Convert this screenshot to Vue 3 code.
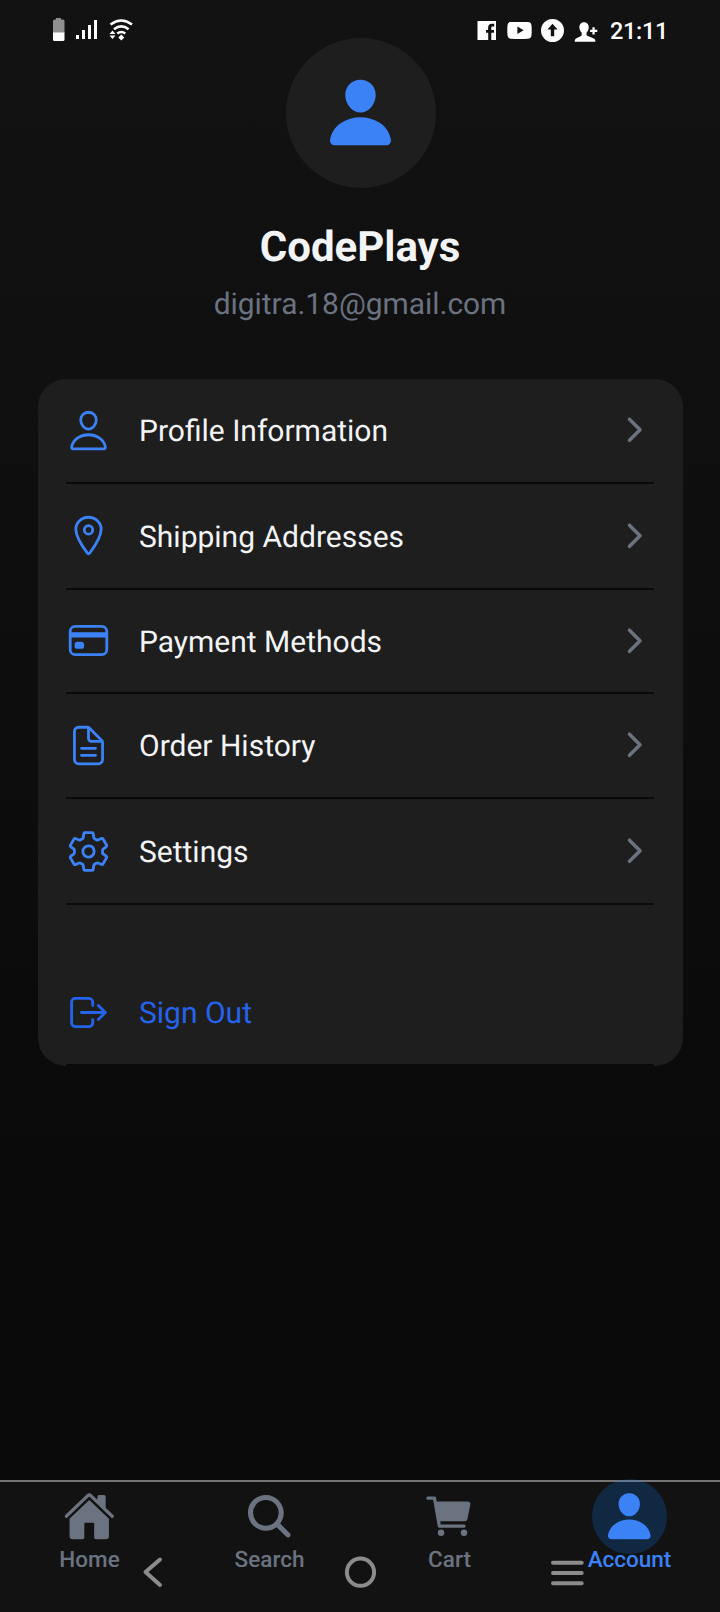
<script setup>
const menu = [
  { label: 'Profile Information', icon: 'person' },
  { label: 'Shipping Addresses', icon: 'location' },
  { label: 'Payment Methods', icon: 'card' },
  { label: 'Order History', icon: 'document' },
  { label: 'Settings', icon: 'settings' },
]

const strokes = {
  person: [
    'M344 144c-3.92 52.87-44 96-88 96s-84.15-43.12-88-96c-4-55 35-96 88-96s92 42 88 96z',
    'M256 304c-87 0-175.3 48-191.64 138.6C62.39 453.52 68.57 464 80 464h352c11.44 0 17.62-10.48 15.65-21.4C431.3 352 343 304 256 304z',
  ],
  location: [
    'M256 48c-79.5 0-144 61.39-144 137 0 87 96 224.87 131.25 272.49a15.77 15.77 0 0025.5 0C304 409.89 400 272.07 400 185c0-75.61-64.5-137-144-137z',
    'M304 192a48 48 0 11-96 0 48 48 0 0196 0z',
  ],
  card: ['M104 96h304a56 56 0 0156 56v208a56 56 0 01-56 56H104a56 56 0 01-56-56V152a56 56 0 0156-56z'],
  document: [
    'M416 221.25V416a48 48 0 01-48 48H144a48 48 0 01-48-48V96a48 48 0 0148-48h98.75a32 32 0 0122.62 9.37l141.26 141.26a32 32 0 019.37 22.62z',
    'M256 56v120a32 32 0 0032 32h120M176 288h160M176 368h160',
  ],
  settings: [
    'M262.29 192.31a64 64 0 1057.4 57.4 64.13 64.13 0 00-57.4-57.4zM416.39 256a154.34 154.34 0 01-1.53 20.79l45.21 35.46a10.81 10.81 0 012.45 13.75l-42.77 74a10.81 10.81 0 01-13.14 4.59l-44.9-18.08a16.11 16.11 0 00-15.17 1.75A164.48 164.48 0 01325 400.8a15.94 15.94 0 00-8.82 12.14l-6.73 47.89a11.08 11.08 0 01-10.68 9.17h-85.54a11.11 11.11 0 01-10.69-8.87l-6.72-47.82a16.07 16.07 0 00-9-12.22 155.3 155.3 0 01-21.46-12.57 16 16 0 00-15.11-1.71l-44.89 18.07a10.81 10.81 0 01-13.14-4.58l-42.77-74a10.8 10.8 0 012.45-13.75l38.21-30a16.05 16.05 0 006-14.08c-.36-4.17-.58-8.33-.58-12.5s.21-8.27.58-12.35a16 16 0 00-6.07-13.94l-38.19-30A10.81 10.81 0 0149.48 186l42.77-74a10.81 10.81 0 0113.14-4.59l44.9 18.08a16.11 16.11 0 0015.17-1.75A164.48 164.48 0 01187 111.2a15.94 15.94 0 008.82-12.14l6.73-47.89A11.08 11.08 0 01213.23 42h85.54a11.11 11.11 0 0110.69 8.87l6.72 47.82a16.07 16.07 0 009 12.22 155.3 155.3 0 0121.46 12.57 16 16 0 0015.11 1.71l44.89-18.07a10.81 10.81 0 0113.14 4.58l42.77 74a10.8 10.8 0 01-2.45 13.75l-38.21 30a16.05 16.05 0 00-6.05 14.08c.33 4.14.55 8.3.55 12.47z',
  ],
}

const personFill =
  'M332.64 64.58C313.18 43.57 286 32 256 32c-30.16 0-57.43 11.5-76.8 32.38-19.58 21.11-29.12 49.8-26.88 80.78C156.76 206.28 203.27 256 256 256s99.16-49.71 103.67-110.82c2.27-30.7-7.33-59.33-27.03-80.6zM432 480H80a31 31 0 01-24.2-11.13c-6.5-7.77-9.12-18.38-7.18-29.11C57.06 392.94 83.4 353.61 124.8 326c36.78-24.51 83.37-38 131.2-38s94.42 13.5 131.2 38c41.4 27.6 67.74 66.93 76.18 113.75 1.94 10.73-.68 21.34-7.18 29.11A31 31 0 01432 480z'

const tabs = [
  {
    label: 'Home',
    d: 'M261.56 101.28a8 8 0 00-11.06 0L66.4 277.15a8 8 0 00-2.47 5.79L63.9 448a32 32 0 0032 32H192a16 16 0 0016-16V328a8 8 0 018-8h80a8 8 0 018 8v136a16 16 0 0016 16h96.06a32 32 0 0032-32V282.94a8 8 0 00-2.47-5.79zM490.91 244.15l-74.8-71.56V64a16 16 0 00-16-16h-48a16 16 0 00-16 16v32l-57.92-55.38C272.77 35.14 264.71 32 256 32c-8.68 0-16.72 3.14-22.14 8.63l-212.7 203.5c-6.22 6-7 15.87-1.34 22.37A16 16 0 0043 267.56L250.5 69.28a8 8 0 0111.06 0l207.52 198.28a16 16 0 0022.59-.44c6.14-6.36 5.63-16.86-.76-22.97z',
  },
  {
    label: 'Search',
    d: 'M456.69 421.39L362.6 327.3a173.81 173.81 0 0034.84-104.58C397.44 126.38 319.06 48 222.72 48S48 126.38 48 222.72s78.38 174.72 174.72 174.72A173.81 173.81 0 00327.3 362.6l94.09 94.09a25 25 0 0035.3-35.3zM97.92 222.72a124.8 124.8 0 11124.8 124.8 124.95 124.95 0 01-124.8-124.8z',
  },
  {
    label: 'Cart',
    d: 'M208 416a32 32 0 11-64 0 32 32 0 0164 0zM432 416a32 32 0 11-64 0 32 32 0 0164 0zM456.8 120.78a23.92 23.92 0 00-18.56-8.78H133.89l-6.13-34.78A16 16 0 00112 64H48a16 16 0 000 32h50.58l45.66 258.78A16 16 0 00160 368h240a16 16 0 000-32H173.42l-5.64-32h241.66A24.07 24.07 0 00433 284.71l28.8-144a24 24 0 00-5-19.93z',
  },
  { label: 'Account', d: personFill, active: true },
]
</script>

<template>
  <div class="screen">
    <header class="status">
      <svg class="status-left" width="88" height="30" viewBox="0 0 88 30">
        <path d="M6 4h5v1.5h2a1.5 1.5 0 011.5 1.5v12H3V7a1.5 1.5 0 011.5-1.5H6z" fill="#8f8f8f" />
        <path d="M3 18.5h11.500v7a1.500 1.500 0 01-1.500 1.500H4.500A1.500 1.500 0 013 25.500z" fill="#fff" />
        <path d="M26 21h3v4h-3zM32 16h3v9h-3zM38 11h3v14h-3zM44 6h3v19h-3z" fill="#fff" />
        <g fill="none" stroke="#fff" stroke-width="2.600">
          <path d="M60.500 10.500q10.800-8 21.500 0" />
          <path d="M64 15.200q7.300-5.500 14.600 0" />
          <path d="M67.300 19.500q4-3 8 0" />
        </g>
        <path d="M71.300 20.500l3 3-3 3-3-3z" fill="#fff" />
        <path d="M62.500 16.500l3 3.500h-6zM62.500 25l3-3.500h-6z" fill="#fff" />
      </svg>
      <div class="status-right">
        <svg width="122" height="26" viewBox="0 0 122 26">
          <g fill="#fff">
            <path d="M.500 4H19v19h-4.700v-7.300h2.700V13h-2.700v-2c0-1 .5-1.400 1.400-1.400h1.500V6.800h-2.300c-2.400 0-3.800 1.500-3.800 3.900V13H9v2.700h2.200V23H.500z" />
            <path d="M34.500 5h16c2.700 0 3.800 1 4 3.500.3 3 .3 6.500 0 9.500-.2 2.500-1.300 3.700-4 3.800-5 .3-11 .3-16 0-2.700-.1-3.800-1.300-4-3.800-.3-3-.3-6.500 0-9.500.2-2.500 1.300-3.500 4-3.500zM40.400 9.500v7.400l6.200-3.700z" fill-rule="evenodd" />
            <path fill-rule="evenodd" d="M75.500 2a11.500 11.500 0 100 23 11.500 11.500 0 000-23zm0 4.800l5 5.600H77.200v6.800h-3.400v-6.800h-3.300z" />
            <path transform="translate(2.500 0)" d="M104.500 5.200c3.200 0 5 2.300 4.700 5.700-.2 2.300-1.100 3.600-2.200 4.800v2.200c1.800 2.200 7.200 2.400 8.500 4.600.4.700.4 1.600.4 2.300H95.200c0-.700 0-1.600.4-2.300 1.300-2.200 5.900-2.400 6.600-4.600v-2.200c-1.100-1.200-2-2.500-2.300-4.800-.3-3.400 1.600-5.700 4.600-5.700zM112.900 10.200h2.300v2.500h2.600V15h-2.600v2.500h-2.300V15h-2.300v-2.300h2.300z" />
          </g>
        </svg>
        <span class="time">21:11</span>
      </div>
    </header>

    <main>
      <div class="avatar">
        <svg viewBox="0 0 512 512"><path :d="personFill" /></svg>
      </div>
      <h1>CodePlays</h1>
      <p class="email">digitra.18@gmail.com</p>

      <section class="card">
        <div v-for="item in menu" :key="item.label" class="row">
          <svg class="icon" viewBox="0 0 512 512">
            <path v-for="d in strokes[item.icon]" :key="d" :d="d" />
            <template v-if="item.icon === 'card'">
              <path class="thick" d="M48 192h416M128 300h48v20h-48z" />
            </template>
          </svg>
          <span class="label">{{ item.label }}</span>
          <svg class="chevron" viewBox="0 0 512 512"><path d="M184 112l144 144-144 144" /></svg>
        </div>
        <div class="row sign-out">
          <svg class="icon" viewBox="0 0 512 512">
            <path d="M304 336v40a40 40 0 01-40 40H104a40 40 0 01-40-40V136a40 40 0 0140-40h152c22.090 0 48 17.910 48 40v40M368 336l80-80-80-80M176 256h256" />
          </svg>
          <span class="label">Sign Out</span>
        </div>
      </section>
    </main>

    <footer>
      <nav class="tabs">
        <div v-for="tab in tabs" :key="tab.label" class="tab" :class="{ active: tab.active }">
          <div class="bubble">
            <svg viewBox="0 0 512 512"><path :d="tab.d" /></svg>
          </div>
          <span class="tab-label">{{ tab.label }}</span>
        </div>
      </nav>
      <svg class="system" width="720" height="40" viewBox="0 0 720 40">
        <g fill="none" stroke="#8c8c8c" stroke-width="4" stroke-linecap="round" stroke-linejoin="round">
          <path d="M160 7.500L145.500 20 160 33" />
          <circle cx="360.500" cy="20.200" r="13.600" />
          <path d="M553 10.700h28.700M553 21h28.700M553 31.300h28.700" />
        </g>
      </svg>
    </footer>
  </div>
</template>

<style>
body {
  background: #0a0a0a;
}
</style>

<style scoped>
.screen {
  box-sizing: border-box;
  width: 720px;
  height: 1612px;
  display: flex;
  flex-direction: column;
  overflow: hidden;
  font-family: Roboto, "Liberation Sans", sans-serif;
  text-rendering: geometricPrecision;
  background: linear-gradient(180deg, #121212 0, #0a0a0a 1200px);
}
svg {
  display: block;
}
.status {
  height: 38px;
  flex: none;
  display: flex;
  justify-content: space-between;
  align-items: flex-start;
  padding: 14px 0 0 50px;
  box-sizing: border-box;
}
.status-left {
  overflow: visible;
}
.status-right {
  width: 243px;
  display: flex;
  align-items: flex-start;
  gap: 11px;
  margin-top: 3px;
}
.time {
  color: #fff;
  font-size: 23.500px;
  line-height: 28px;
  font-weight: 500;
  letter-spacing: -0.3px;
}
main {
  flex: 1;
  display: flex;
  flex-direction: column;
  align-items: center;
}
.avatar {
  width: 150px;
  height: 150px;
  border-radius: 50%;
  background: #1e1e1e;
  display: flex;
  align-items: center;
  justify-content: center;
  margin-left: 1px;
}
.avatar svg {
  width: 75px;
  height: 75px;
  margin: 0 1px 1px 0;
  fill: #3b82f6;
}
h1 {
  margin: 35px 0 0;
  font-size: 42px;
  line-height: 50px;
  font-weight: 700;
  color: #f3f4f6;
}
.email {
  margin: 14px 0 0;
  font-size: 29.900px;
  line-height: 36px;
  color: #6b7280;
}
.card {
  box-sizing: border-box;
  width: 645px;
  margin: 56px 0 0 1px;
  padding: 0 29px 0 28px;
  border-radius: 28px;
  background: #1e1e1e;
  display: grid;
  grid-template-rows: 105px 106px 104px 105px 106px 161px;
}
.row {
  display: flex;
  align-items: center;
  border-bottom: 2px solid #0a0a0a;
}
.icon {
  width: 45px;
  height: 45px;
  fill: none;
  stroke: #3b82f6;
  stroke-width: 32;
  stroke-linecap: round;
  stroke-linejoin: round;
}
.row:nth-child(2) .icon,
.row:nth-child(3) .icon {
  margin-bottom: 1px;
}
.thick {
  stroke-width: 60;
  stroke-linecap: butt;
}
.label {
  flex: 1;
  margin: 3px 0 0 28px;
  font-size: 30px;
  line-height: 36px;
  color: #f3f4f6;
}
.chevron {
  width: 37.500px;
  height: 37.500px;
  margin: 0 1px 1px 0;
  fill: none;
  stroke: #6b7280;
  stroke-width: 48;
  stroke-linecap: round;
  stroke-linejoin: round;
}
.sign-out {
  margin-top: 56px;
}
.sign-out .icon {
  stroke: #2563eb;
}
.sign-out .label {
  color: #2563eb;
}
footer {
  flex: none;
  height: 132px;
  box-sizing: border-box;
  border-top: 2px solid #757575;
  background: #121212;
}
.tabs {
  height: 85px;
  display: grid;
  grid-template-columns: repeat(4, 180px);
  margin-left: -0.5px;
}
.tab {
  height: 88px;
  margin-top: -3px;
  overflow: hidden;
  display: flex;
  flex-direction: column;
  align-items: center;
  color: #6b7280;
}
.bubble {
  flex: none;
  width: 75px;
  height: 75px;
  border-radius: 50%;
  display: flex;
  align-items: center;
  justify-content: center;
}
.bubble svg {
  width: 52.500px;
  height: 52.500px;
  margin-right: 1px;
  fill: currentColor;
}
.active {
  color: #3b82f6;
}
.active .bubble {
  background: rgba(10, 132, 255, 0.2);
}
.tab-label {
  flex: none;
  margin-top: -8px;
  font-size: 22.500px;
  line-height: 28px;
  font-weight: 500;
}
.system {
  margin-top: -15px;
  position: relative;
}
</style>
